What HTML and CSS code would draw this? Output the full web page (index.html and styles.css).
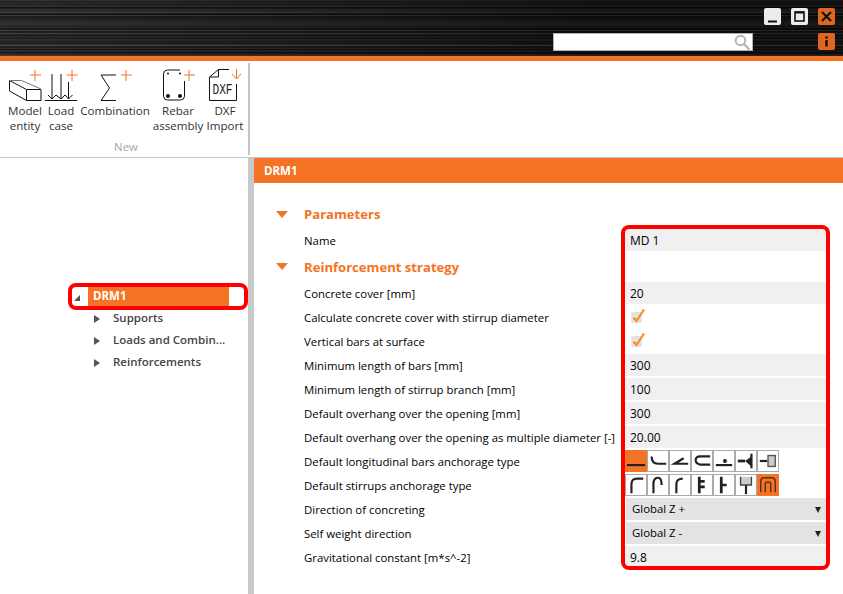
FILE: index.html
```html
<!DOCTYPE html>
<html lang="en">
<head>
<meta charset="utf-8">
<title>DRM1</title>
<link rel="stylesheet" href="styles.css">
</head>
<body>
<div class="app">
  <header class="titlebar">
    <div class="title-row">
      <button class="winbtn light"><svg viewBox="0 0 17 17" class="winico"><path d="M4 13.5h9" stroke="#111" stroke-width="2"/></svg></button>
      <button class="winbtn light"><svg viewBox="0 0 17 17" class="winico"><rect x="4" y="4" width="9" height="9" fill="none" stroke="#111" stroke-width="1.6"/><path d="M4 4.5h9" stroke="#111" stroke-width="2"/></svg></button>
      <button class="winbtn accent"><svg viewBox="0 0 17 17" class="winico"><path d="M4 4l9 9M13 4l-9 9" stroke="#111" stroke-width="2.2"/></svg></button>
    </div>
    <div class="title-row search-row">
      <div class="search"><svg viewBox="0 0 18 18" class="search-ico"><circle cx="7.5" cy="7.5" r="4.8" fill="none" stroke="#b5b5b5" stroke-width="2"/><path d="M11 11l5.5 5.5" stroke="#b5b5b5" stroke-width="2.2"/></svg></div>
      <button class="winbtn accent"><svg viewBox="0 0 17 17" class="winico"><path d="M8.5 3.5v2M8.5 7v6.5" stroke="#111" stroke-width="2.4"/></svg></button>
    </div>
  </header>
  <div class="stripe"></div>

  <section class="ribbon">
    <div class="ribbon-group">
      <div class="ribbon-items">
        <div class="ribbon-item w-model">
          <svg class="ribbon-ico" viewBox="7 67 36 36"><path d="M35 70v11M30 75h11" class="plus"/><path d="M9.500 80.500L26.500 89.500H41V100.500H26.500L9.500 91zM26.500 89.500V100.500" class="ink"/><path d="M9.500 80.500H21.500L41 89" class="ink grey"/></svg>
          <span>Model<br>entity</span>
        </div>
        <div class="ribbon-item w-load">
          <svg class="ribbon-ico" viewBox="43 67 36 36"><path d="M72 70v11M66.500 75h11" class="plus"/><path d="M45 100.500H77M52 74v25M61 74v25M68.500 82v17M48 95l4 4 4-4 5 4 4-4 3.500 4 4-4" class="ink"/></svg>
          <span>Load<br>case</span>
        </div>
        <div class="ribbon-item w-comb">
          <svg class="ribbon-ico" viewBox="97 67 36 36"><path d="M126 70v11M121 75h11" class="plus"/><path d="M116 75H101L109.500 88 101 100.500H116" class="ink"/></svg>
          <span>Combination</span>
        </div>
        <div class="ribbon-item w-rebar">
          <svg class="ribbon-ico" viewBox="160 67 36 36"><path d="M189 70v11M184 75h11" class="plus"/><path d="M184.500 81V96a4 4 0 0 1-4 4H167.500a4 4 0 0 1-4-4V74a4 4 0 0 1 4-4H180" class="ink"/><circle cx="168" cy="73.500" r="1" class="dot"/><circle cx="180" cy="73.500" r="1" class="dot"/><circle cx="168" cy="96" r="2" class="dot"/><circle cx="180" cy="96" r="2" class="dot"/></svg>
          <span>Rebar<br>assembly</span>
        </div>
        <div class="ribbon-item w-dxf">
          <svg class="ribbon-ico" viewBox="207 67 36 36"><path d="M236.500 69v9M232 74l4.500 5 4.500-5" class="plus"/><path d="M229 69.500H218.500L209.500 77V100.500H236.500V84M218.500 69.500V77H209.500" class="ink"/><text x="212.500" y="94" textLength="20" lengthAdjust="spacingAndGlyphs" class="dxf-text">DXF</text></svg>
          <span>DXF<br>Import</span>
        </div>
      </div>
      <div class="ribbon-caption">New</div>
    </div>
  </section>

  <main class="workspace">
    <nav class="tree">
      <div class="tree-root">
        <span class="tri-open"></span>
        <span class="tree-root-label">DRM1</span>
      </div>
      <div class="tree-child"><span class="tri-closed"></span>Supports</div>
      <div class="tree-child"><span class="tri-closed"></span>Loads and Combin...</div>
      <div class="tree-child"><span class="tri-closed"></span>Reinforcements</div>
      <div class="callout callout-tree"></div>
    </nav>
    <div class="splitter"></div>
    <section class="panel">
      <h1 class="panel-title">DRM1</h1>
      <div class="form">
        <div class="section s-params"><span class="tri-section"></span>Parameters</div>
        <div class="row"><label>Name</label><div class="val">MD 1</div></div>
        <div class="section s-reinf"><span class="tri-section"></span>Reinforcement strategy</div>
        <div class="row"><label>Concrete cover [mm]</label><div class="val">20</div></div>
        <div class="row"><label>Calculate concrete cover with stirrup diameter</label><div class="val-check"><svg class="check" viewBox="0 0 15 16"><rect x="1" y="4" width="11" height="11" rx="2" fill="#e2e2e2"/><path d="M3.500 9.500l3 3.500 7.500-11.500" fill="none" stroke="#f7901e" stroke-width="2.200"/></svg></div></div>
        <div class="row"><label>Vertical bars at surface</label><div class="val-check"><svg class="check" viewBox="0 0 15 16"><rect x="1" y="4" width="11" height="11" rx="2" fill="#e2e2e2"/><path d="M3.500 9.500l3 3.500 7.500-11.500" fill="none" stroke="#f7901e" stroke-width="2.200"/></svg></div></div>
        <div class="row"><label>Minimum length of bars [mm]</label><div class="val">300</div></div>
        <div class="row"><label>Minimum length of stirrup branch [mm]</label><div class="val">100</div></div>
        <div class="row"><label>Default overhang over the opening [mm]</label><div class="val">300</div></div>
        <div class="row"><label>Default overhang over the opening as multiple diameter [-]</label><div class="val">20.00</div></div>
        <div class="row"><label>Default longitudinal bars anchorage type</label>
          <div class="anchors">
            <div class="anchor on"><svg viewBox="0 0 22 22"><path d="M1 15.500H21" class="a"/></svg></div>
            <div class="anchor"><svg viewBox="0 0 22 22"><path d="M4 6Q4 14 11 14H20" class="a"/></svg></div>
            <div class="anchor"><svg viewBox="0 0 22 22"><path d="M15 8L5 14H20" class="a"/></svg></div>
            <div class="anchor"><svg viewBox="0 0 22 22"><path d="M20 6H9Q4 6 4 10T9 15H20" class="a"/></svg></div>
            <div class="anchor"><svg viewBox="0 0 22 22"><path d="M2 15.500H20" class="a"/><circle cx="12" cy="11" r="2.200" fill="#222"/></svg></div>
            <div class="anchor"><svg viewBox="0 0 22 22"><path d="M2 11H10" class="a thick"/><path d="M10 11L17 6V17Z" fill="#222"/><path d="M17 3V19" class="a"/></svg></div>
            <div class="anchor"><svg viewBox="0 0 22 22"><path d="M2 11H10" class="a"/><rect x="11" y="5" width="8" height="12" fill="#ccc" stroke="#555" stroke-width="1.500"/></svg></div>
          </div>
        </div>
        <div class="row"><label>Default stirrups anchorage type</label>
          <div class="anchors">
            <div class="anchor"><svg viewBox="0 0 22 22"><path d="M6 20V10Q6 4 12 4H19" class="a"/></svg></div>
            <div class="anchor"><svg viewBox="0 0 22 22"><path d="M6 20V8Q7 3 11 3T15 11" class="a"/></svg></div>
            <div class="anchor"><svg viewBox="0 0 22 22"><path d="M7 20V10Q7 4 14 4" class="a"/></svg></div>
            <div class="anchor"><svg viewBox="0 0 22 22"><path d="M8 2V20M8 7H14M8 13H14" class="a thick"/></svg></div>
            <div class="anchor"><svg viewBox="0 0 22 22"><path d="M8 2V20M8 11H14" class="a thick"/></svg></div>
            <div class="anchor"><svg viewBox="0 0 22 22"><path d="M11 11V21" class="a"/><path d="M5 2V11H17V2" fill="#ccc" stroke="#444" stroke-width="1.500"/></svg></div>
            <div class="anchor on"><svg viewBox="0 0 22 22"><path d="M3 19V7Q3 3 7 3H15Q19 3 19 7V19M8 19V10Q8 8 10 8H12Q14 8 14 10V19" class="a thin"/></svg></div>
          </div>
        </div>
        <div class="row"><label>Direction of concreting</label><div class="select">Global Z +<span class="caret"></span></div></div>
        <div class="row"><label>Self weight direction</label><div class="select">Global Z -<span class="caret"></span></div></div>
        <div class="row"><label>Gravitational constant [m*s^-2]</label><div class="val">9.8</div></div>
        <div class="callout callout-form"></div>
      </div>
    </section>
  </main>
</div>
</body>
</html>
```
FILE: styles.css
```css
* { box-sizing: border-box; }
html, body { margin: 0; height: 100%; overflow: hidden; background: #fff; }
body { font-family: "Open Sans", "Noto Sans", sans-serif; font-size: 11.380px; color: #000; }
.app { display: flex; flex-direction: column; height: 594px; width: 843px; }

.titlebar {
  height: 56px;
  padding: 8px 8px 0 0;
  display: flex;
  flex-direction: column;
  gap: 8px;
  background-color: #141414;
  background-image:
    linear-gradient(90deg, rgba(255,255,255,.05), rgba(0,0,0,.35) 70%),
    repeating-linear-gradient(180deg, rgba(255,255,255,.08) 0 1px, transparent 1px 3px),
    repeating-linear-gradient(180deg, rgba(0,0,0,.55) 0 1px, transparent 1px 7px),
    repeating-linear-gradient(180deg, rgba(255,255,255,.07) 0 2px, transparent 2px 11px),
    repeating-linear-gradient(180deg, rgba(255,255,255,.06) 0 1px, transparent 1px 5px),
    repeating-linear-gradient(180deg, rgba(0,0,0,.4) 0 2px, transparent 2px 17px);
}
.title-row { display: flex; justify-content: flex-end; gap: 10px; }
.search-row { gap: 65px; }
.winbtn { width: 17px; height: 17px; padding: 0; border: 0; border-radius: 2px; display: block; }
.winbtn.light { background: #ececec; }
.winbtn.accent { background: #e0651f; }
.winico { display: block; width: 17px; height: 17px; }
.search { width: 200px; height: 18px; background: #fff; border: 1px solid #b0b0b0; display: flex; justify-content: flex-end; }
.search-ico { width: 18px; height: 18px; margin: -1px 0 0 0; position: relative; left: -1px; }
.stripe { height: 5px; background: #f47324; }

.ribbon { height: 97px; border-bottom: 1px solid #c4c4c4; padding-top: 2px; display: flex; }
.ribbon-group { width: 250px; height: 92px; border-right: 2px solid #c4c4c4; padding: 4px 0 0 7px; display: flex; flex-direction: column; }
.ribbon-items { display: flex; height: 74px; }
.ribbon-item { display: flex; flex-direction: column; align-items: center; text-align: center; line-height: 15px; color: #333; white-space: nowrap; font-size: 11.600px; }
.w-model { width: 36px; }
.w-load { width: 36px; }
.w-comb { width: 72px; }
.w-rebar { width: 54px; }
.w-dxf { width: 40px; }
.ribbon-ico { width: 36px; height: 36px; flex: none; overflow: visible; }
.plus { fill: none; stroke: #f47324; stroke-width: 1; }
.ink { fill: none; stroke: #111; stroke-width: 1; }
.ink.grey { stroke: #777; }
.dot { fill: #111; }
.dxf-text { font-family: "Liberation Mono", monospace; font-size: 15px; fill: #222; }
.ribbon-caption { text-align: center; color: #a3a3a3; line-height: 16px; padding-right: 3px; }

.workspace { flex: 1; display: flex; min-height: 0; }
.tree { width: 248px; position: relative; padding-top: 127px; font-size: 11.500px; }
.tree-root { display: flex; align-items: center; height: 22px; margin-bottom: 0; padding-left: 74px; }
.tri-open { width: 0; height: 0; border-left: 6px solid transparent; border-bottom: 6px solid #555; margin-right: 8px; position: relative; top: 2px; }
.tree-root-label { width: 141px; height: 22px; background: #f47324; color: #fff; font-weight: 700; line-height: 22px; padding-left: 5px; }
.tree-child { height: 22px; line-height: 22px; padding-left: 113px; font-weight: 600; color: #444; position: relative; }
.tree-child .tri-closed { position: absolute; left: 94px; top: 8px; }
.tri-closed { width: 0; height: 0; border-top: 4px solid transparent; border-bottom: 4px solid transparent; border-left: 6px solid #555; }
.splitter { width: 6px; background: #c9c9c9; }

.panel { flex: 1; min-width: 0; }
.panel-title { margin: 0; height: 25px; background: #f47324; color: #fff; font-size: 11.500px; font-weight: 700; line-height: 25px; padding-left: 10px; }
.form { position: relative; padding: 19px 0 0 50px; display: flex; flex-direction: column; gap: 2px; }
.section { display: flex; align-items: center; color: #f47324; font-weight: 700; font-size: 13.100px; position: relative; }
.s-params { height: 25px; padding-bottom: 2px; }
.s-reinf { height: 27px; }
.tri-section { position: absolute; left: -28px; top: 50%; margin-top: -4px; width: 0; height: 0; border-left: 6px solid transparent; border-right: 6px solid transparent; border-top: 7px solid #f47324; }
.row { display: grid; grid-template-columns: 321px 201px; height: 22px; align-items: center; }
.row label { white-space: nowrap; }
.val { height: 22px; background: #f0f0f0; line-height: 23px; padding-left: 5px; font-size: 12px; }
.val-check { height: 22px; padding-left: 5px; display: flex; align-items: center; }
.check { width: 15px; height: 16px; display: block; position: relative; top: -1px; }
.select { height: 22px; background: #e3e3e3; line-height: 22px; padding-left: 6px; margin-left: 1px; position: relative; }
.caret { position: absolute; right: 5px; top: 9px; width: 0; height: 0; border-left: 3.500px solid transparent; border-right: 3.500px solid transparent; border-top: 6px solid #222; }
.anchors { display: flex; }
.anchor { width: 22px; height: 22px; border: 1px solid #aaa; background: #fff; }
.anchor.on { background: #f47324; border-color: #f47324; }
.anchor svg { display: block; width: 20px; height: 20px; }
.a { fill: none; stroke: #222; stroke-width: 2.400; }
.a.thick { stroke-width: 3; }
.a.thin { stroke: #5a3315; stroke-width: 1.600; }

.callout { position: absolute; border: 4px solid #f00; border-radius: 8px; pointer-events: none; }
.callout-tree { left: 68px; top: 125px; width: 180px; height: 27px; }
.callout-form { left: 367px; top: 42px; width: 209px; height: 345px; }
```
